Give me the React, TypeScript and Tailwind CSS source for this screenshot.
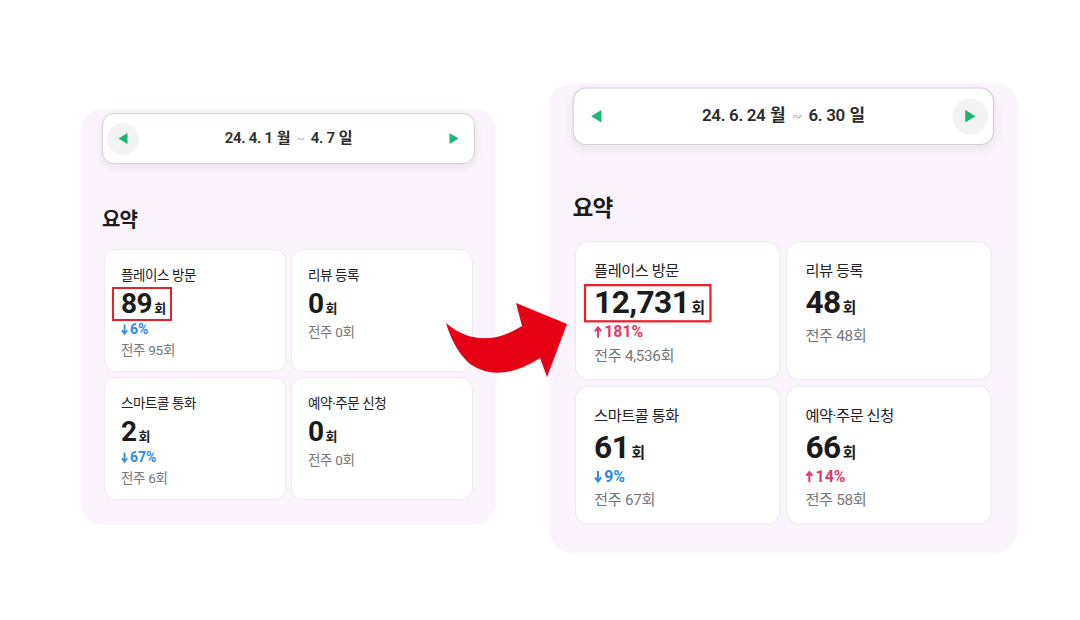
type Stat = {
  label: string
  value: string
  change?: { dir: 'up' | 'down'; pct: string }
  prev: string
  boxed?: boolean
}

type PanelData = {
  from: [string, string]
  to: [string, string]
  activeSide: 'left' | 'right'
  stats: Stat[]
}

const panels: PanelData[] = [
  {
    from: ['24. 4. 1', '월'],
    to: ['4. 7', '일'],
    activeSide: 'left',
    stats: [
      { label: '플레이스 방문', value: '89', change: { dir: 'down', pct: '6%' }, prev: '95', boxed: true },
      { label: '리뷰 등록', value: '0', prev: '0' },
      { label: '스마트콜 통화', value: '2', change: { dir: 'down', pct: '67%' }, prev: '6' },
      { label: '예약·주문 신청', value: '0', prev: '0' },
    ],
  },
  {
    from: ['24. 6. 24', '월'],
    to: ['6. 30', '일'],
    activeSide: 'right',
    stats: [
      { label: '플레이스 방문', value: '12,731', change: { dir: 'up', pct: '181%' }, prev: '4,536', boxed: true },
      { label: '리뷰 등록', value: '48', prev: '48' },
      { label: '스마트콜 통화', value: '61', change: { dir: 'down', pct: '9%' }, prev: '67' },
      { label: '예약·주문 신청', value: '66', change: { dir: 'up', pct: '14%' }, prev: '58' },
    ],
  },
]

function Triangle({ side }: { side: 'left' | 'right' }) {
  return (
    <svg width="10" height="11" viewBox="0 0 10 11">
      {side === 'left' ? (
        <polygon points="9.5,0 9.5,11 0.5,5.5" fill="#1db56f" />
      ) : (
        <polygon points="0.5,0 0.5,11 9.5,5.5" fill="#1db56f" />
      )}
    </svg>
  )
}

function ChangeArrow({ dir }: { dir: 'up' | 'down' }) {
  return (
    <svg width="7" height="11" viewBox="0 0 7 11" className="mr-[2px]">
      {dir === 'down' ? (
        <path d="M3.5 0.5V9 M0.8 6.2L3.5 9.6L6.2 6.2" stroke="currentColor" strokeWidth="1.8" fill="none" />
      ) : (
        <path d="M3.5 10.5V2 M0.8 4.8L3.5 1.4L6.2 4.8" stroke="currentColor" strokeWidth="1.8" fill="none" />
      )}
    </svg>
  )
}

function StatCard({ stat }: { stat: Stat }) {
  return (
    <div className="h-[123px] rounded-[12px] border border-[#ebebf0] bg-white pl-[16px] pt-[15px]">
      <div className="text-[13.5px] leading-[20px] tracking-[-0.4px] text-[#222]">{stat.label}</div>
      <div className="mt-[3px] h-[32px]">
        <div className="relative inline-flex h-[32px] items-baseline">
          {stat.boxed && (
            <span className="absolute -left-[9px] -right-[6px] -top-[1px] -bottom-[1px] border-2 border-[#e8232c]"></span>
          )}
          <span className="text-[28px] font-bold leading-[32px] tracking-[-0.5px] text-[#1b1b1b]">{stat.value}</span>
          <span className="ml-[2px] text-[13px] font-bold leading-[32px] text-[#1b1b1b]">회</span>
        </div>
      </div>
      {stat.change && (
        <div
          className={
            stat.change.dir === 'down'
              ? 'mt-[1px] flex h-[16px] items-center text-[14px] font-bold text-[#2f88e6]'
              : 'mt-[1px] flex h-[16px] items-center text-[14px] font-bold text-[#e43a6a]'
          }
        >
          <ChangeArrow dir={stat.change.dir} />
          {stat.change.pct}
        </div>
      )}
      <div
        className={
          stat.change
            ? 'mt-[3px] text-[13.5px] leading-[20px] tracking-[-0.3px] text-[#777]'
            : 'mt-[2px] text-[13.5px] leading-[20px] tracking-[-0.3px] text-[#777]'
        }
      >
        전주 {stat.prev}회
      </div>
    </div>
  )
}

function Panel({ data }: { data: PanelData }) {
  return (
    <div className="flex h-[414px] w-[413px] flex-col rounded-[20px] bg-[#fcf4fc] pt-[3px] shadow-[0_0_3px_rgba(0,0,0,0.07)]">
      {/* Date range bar */}
      <div className="mx-[20px] flex h-[51px] items-center justify-between rounded-[12px] border border-[#cfd1d7] bg-white px-[4px] shadow-[0_4px_10px_rgba(0,0,0,0.07)]">
        <div
          className={
            data.activeSide === 'left'
              ? 'flex h-8 w-8 items-center justify-center rounded-full bg-[#f3f3f3]'
              : 'flex h-8 w-8 items-center justify-center rounded-full'
          }
        >
          <Triangle side="left" />
        </div>
        <div className="flex items-center text-[15px] font-semibold tracking-[-0.3px] text-[#2a2a2a]">
          <span>{data.from[0]}</span>
          <span className="ml-[4px]">{data.from[1]}</span>
          <span className="mx-[6px] text-[13px] font-normal text-[#b5b5b5]">~</span>
          <span>{data.to[0]}</span>
          <span className="ml-[4px]">{data.to[1]}</span>
        </div>
        <div
          className={
            data.activeSide === 'right'
              ? 'flex h-8 w-8 items-center justify-center rounded-full bg-[#f3f3f3]'
              : 'flex h-8 w-8 items-center justify-center rounded-full'
          }
        >
          <Triangle side="right" />
        </div>
      </div>

      <h2 className="mx-[20px] mt-[42px] text-[20px] font-bold leading-[28px] tracking-[-0.8px] text-[#1b1b1b]">요약</h2>

      <div className="mx-[22px] mt-[15px] grid grid-cols-2 gap-[5px]">
        {data.stats.map((s) => (
          <StatCard key={s.label} stat={s} />
        ))}
      </div>
    </div>
  )
}

export default function App() {
  return (
    <div
      className="relative flex h-[620px] w-[1080px] items-start overflow-hidden bg-white pl-[82px]"
      style={{ fontFamily: 'Roboto, "Noto Sans CJK KR", sans-serif' }}
    >
      <div className="mt-[110px]">
        <Panel data={panels[0]} />
      </div>
      <div className="ml-[55px] mt-[84px] h-[468px] w-[467px]">
        <div className="origin-top-left scale-[1.13]">
          <Panel data={panels[1]} />
        </div>
      </div>

      {/* Curved arrow */}
      <svg className="absolute left-0 top-0" width="1080" height="620" viewBox="0 0 1080 620">
        <path
          d="M446 323 Q480 352 522 326 L516 303 L567 324 L547 377 L540 358 Q500 384 470 364 Q454 350 446 323 Z"
          fill="#e60013"
        />
      </svg>
    </div>
  )
}
